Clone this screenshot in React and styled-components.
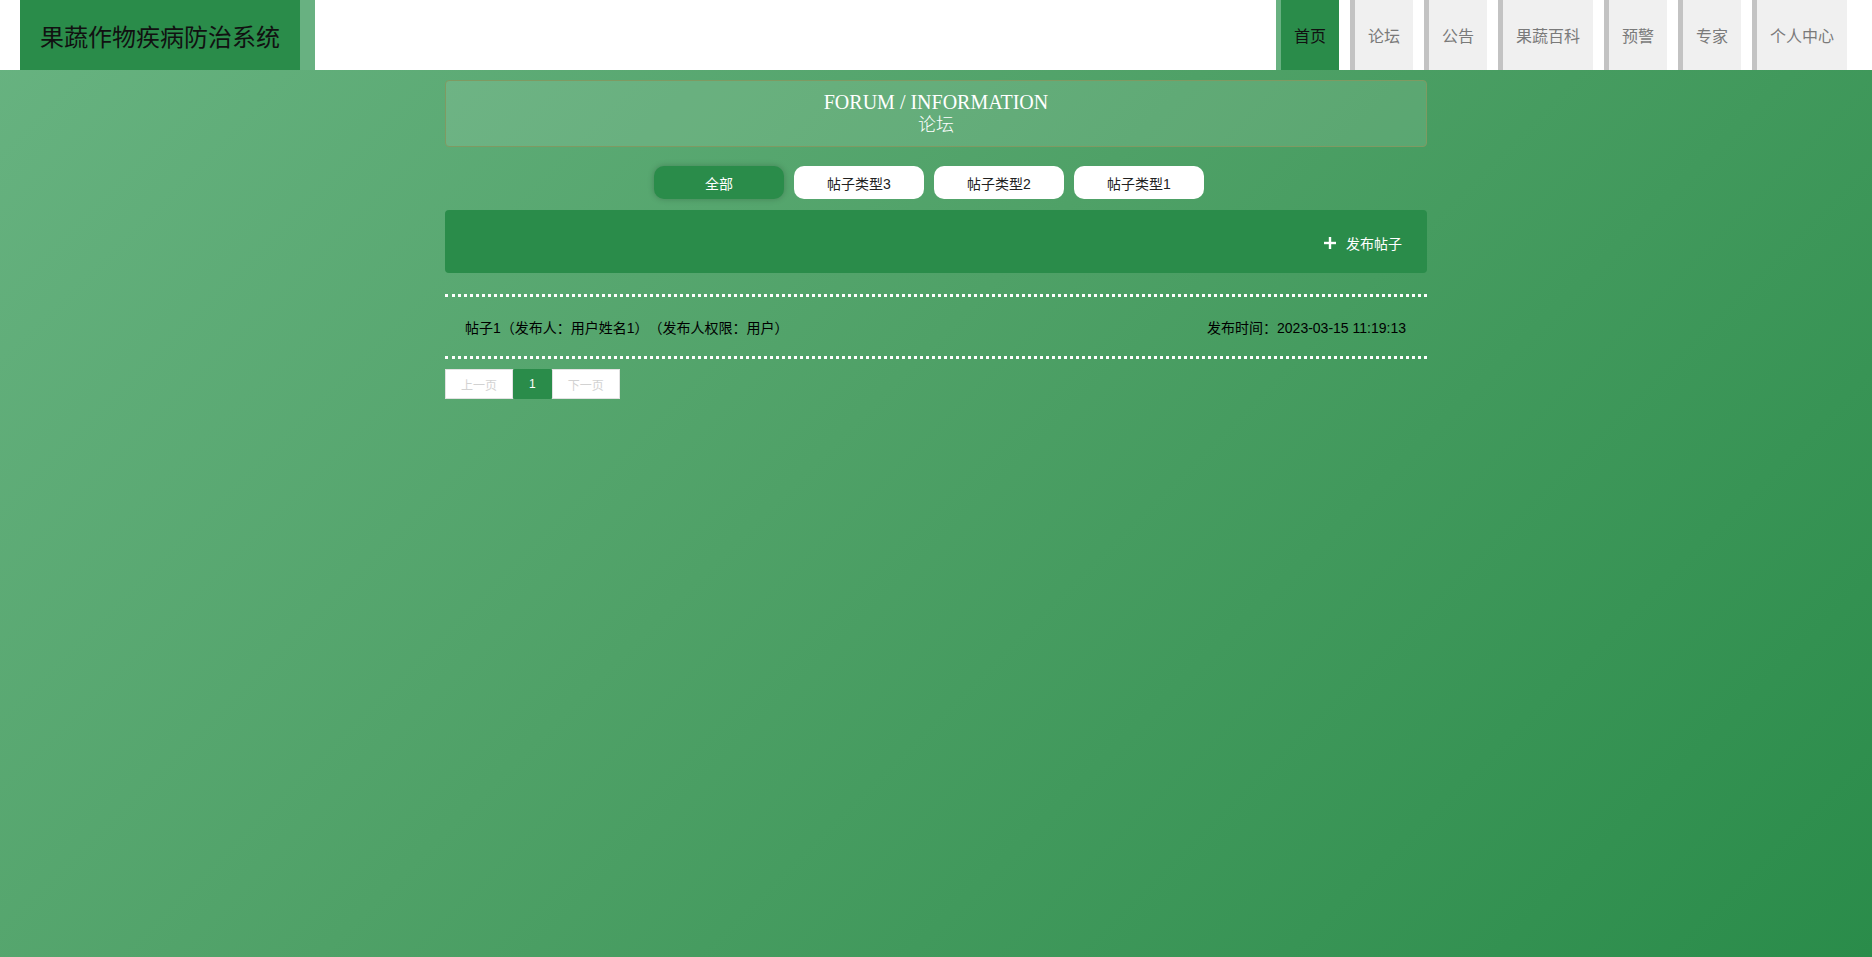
import styled, { createGlobalStyle } from 'styled-components';

const GlobalStyle = createGlobalStyle`
  html, body {
    margin: 0;
    padding: 0;
  }
  body {
    min-height: 100vh;
    background: linear-gradient(135deg, #68b381 0%, #4fa167 45%, #2a8c4a 100%);
    font-family: "Liberation Sans", "Noto Sans CJK SC", sans-serif;
    text-spacing-trim: space-all;
  }
`;

const navItems = ['首页', '论坛', '公告', '果蔬百科', '预警', '专家', '个人中心'];
const tabs = ['全部', '帖子类型3', '帖子类型2', '帖子类型1'];

export default function App() {
  return (
    <>
      <GlobalStyle />
      <Header>
        <Logo>果蔬作物疾病防治系统</Logo>
        <Nav>
          {navItems.map((item, i) => (
            <NavItem key={item} $active={i === 0}>
              {item}
            </NavItem>
          ))}
        </Nav>
      </Header>
      <Main>
        <TitleBox>
          <TitleEn>FORUM / INFORMATION</TitleEn>
          <TitleCn>论坛</TitleCn>
        </TitleBox>
        <Tabs>
          {tabs.map((t, i) => (
            <Tab key={t} $active={i === 0}>
              {t}
            </Tab>
          ))}
        </Tabs>
        <ActionBar>
          <PostBtn>
            <svg width="12" height="12" viewBox="0 0 12 12">
              <rect x="4.8" y="0" width="2.4" height="12" fill="#fff" />
              <rect x="0" y="4.8" width="12" height="2.4" fill="#fff" />
            </svg>
            发布帖子
          </PostBtn>
        </ActionBar>
        <PostList>
          <PostRow>
            <span>帖子1（发布人：用户姓名1）（发布人权限：用户）</span>
            <span>发布时间：2023-03-15 11:19:13</span>
          </PostRow>
        </PostList>
        <Pager>
          <PageBtn $disabled>上一页</PageBtn>
          <PageBtn $active>1</PageBtn>
          <PageBtn $disabled>下一页</PageBtn>
        </Pager>
      </Main>
    </>
  );
}

const Header = styled.header`
  height: 70px;
  background: #fff;
  display: flex;
  align-items: stretch;
  justify-content: space-between;
  padding: 0 25px 0 20px;
`;

const Logo = styled.h1`
  margin: 0;
  padding: 0 20px;
  display: flex;
  align-items: center;
  background: #2a8c4a;
  border-right: 15px solid #68b181;
  font-size: 24px;
  font-weight: normal;
  color: #111;
  white-space: nowrap;
`;

const Nav = styled.nav`
  display: flex;
  gap: 11px;
`;

const NavItem = styled.a`
  display: flex;
  align-items: center;
  padding: 0 13px;
  border-left: 5px solid ${(p) => (p.$active ? '#68b181' : '#c3c3c3')};
  background: ${(p) => (p.$active ? '#2a8c4a' : '#f0f0f0')};
  color: ${(p) => (p.$active ? '#111' : '#7a7a7a')};
  font-size: 16px;
  cursor: pointer;
`;

const Main = styled.main`
  width: 982px;
  margin: 0 auto;
  padding-top: 10px;
`;

const TitleBox = styled.div`
  height: 65px;
  border: 1px solid #7f9a62;
  border-radius: 4px;
  background: rgba(255, 255, 255, 0.1);
  display: flex;
  flex-direction: column;
  align-items: center;
  justify-content: center;
  color: #fff;
  font-family: "Liberation Serif", "Noto Sans CJK SC", serif;
  font-size: 20px;
  line-height: 23px;
`;

const TitleEn = styled.div`
  padding-top: 1px;
`;

const TitleCn = styled.div`
  font-size: 18px;
  font-weight: 300;
`;

const Tabs = styled.div`
  margin-top: 19px;
  display: flex;
  justify-content: center;
  gap: 10px;
  padding-right: 14px;
`;

const Tab = styled.button`
  width: 130px;
  height: 33px;
  border: none;
  border-radius: 10px;
  background: ${(p) => (p.$active ? '#2a8c4a' : '#fff')};
  color: ${(p) => (p.$active ? '#fff' : '#222')};
  box-shadow: ${(p) => (p.$active ? '0 0 6px rgba(0, 0, 0, 0.22)' : 'none')};
  font-family: inherit;
  font-size: 14px;
  cursor: pointer;
`;

const ActionBar = styled.div`
  margin-top: 11px;
  height: 63px;
  border-radius: 4px;
  background: #2a8c4a;
  display: flex;
  align-items: center;
  justify-content: flex-end;
  padding: 0 25px;
`;

const PostBtn = styled.span`
  display: flex;
  align-items: center;
  gap: 10px;
  color: #fff;
  font-size: 14px;
  padding-top: 2px;
  cursor: pointer;
`;

const PostList = styled.div`
  margin-top: 21px;
`;

const PostRow = styled.div`
  height: 59px;
  border-top: 3px dotted #fff;
  border-bottom: 3px dotted #fff;
  display: flex;
  align-items: center;
  justify-content: space-between;
  padding: 0 21px 0 20px;
  font-size: 14px;
  color: #000;
`;

const Pager = styled.div`
  margin-top: 10px;
  display: flex;
`;

const PageBtn = styled.span`
  height: 30px;
  box-sizing: border-box;
  display: flex;
  align-items: center;
  justify-content: center;
  padding: 0 ${(p) => (p.$active ? '15px' : '14px')};
  min-width: ${(p) => (p.$active ? '38px' : '68px')};
  background: ${(p) => (p.$active ? '#2a8c4a' : '#fff')};
  border: 1px solid ${(p) => (p.$active ? '#2a8c4a' : '#e2e2e2')};
  border-radius: ${(p) => (p.$active ? '2px' : '0')};
  color: ${(p) => (p.$disabled ? '#d2d2d2' : '#fff')};
  font-size: 12px;
`;
